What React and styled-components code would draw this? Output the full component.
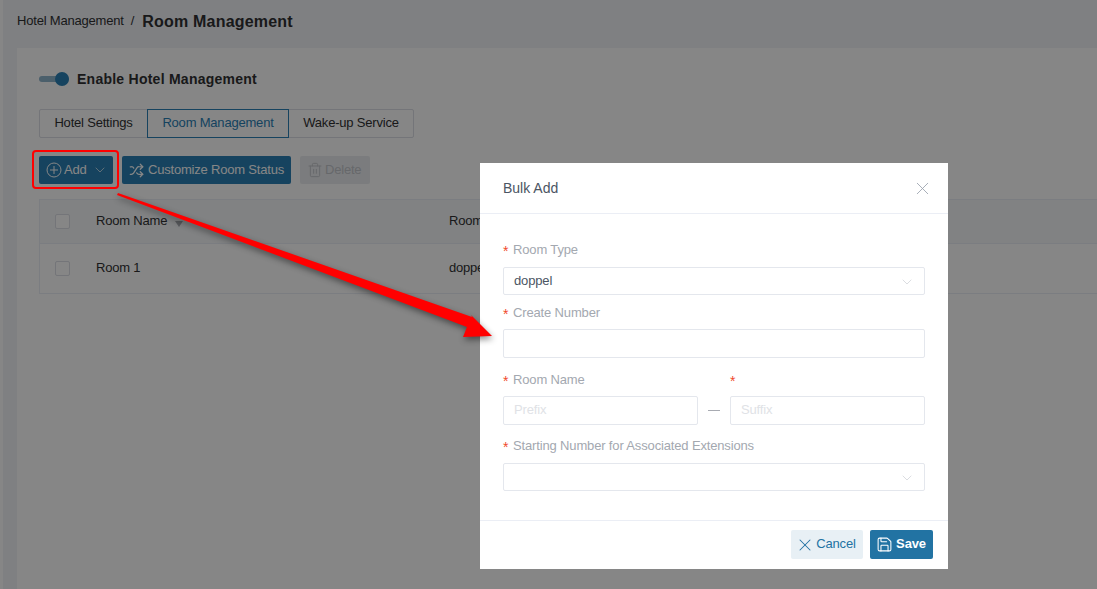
import React from 'react'
import styled, { createGlobalStyle } from 'styled-components'
import { ChevronDown, Shuffle, Trash2, X, Save } from 'lucide-react'

const Global = createGlobalStyle`
  html, body { margin: 0; padding: 0; height: 100%; overflow: hidden; }
  body { font-family: "Liberation Sans", Arial, sans-serif; font-size: 13px; color: #303133; }
`

const Page = styled.div`
  position: relative;
  width: 1097px;
  height: 589px;
  overflow: hidden;
  background: linear-gradient(to right, #fff 3px, #f1f4f8 3px);
  padding: 0 0 0 17px;
  box-sizing: border-box;
`
const Crumbs = styled.div`
  height: 48px;
  display: flex;
  align-items: center;
  padding-bottom: 5px;
  box-sizing: border-box;
`
const CrumbLink = styled.span`
  font-size: 13px;
  letter-spacing: -0.2px;
  color: #303133;
  margin-top: -2px;
`
const Slash = styled.span`
  margin: -2px 8px 0 7px;
  font-size: 13px;
  color: #303133;
`
const CrumbTitle = styled.span`
  font-size: 16px;
  font-weight: 700;
  letter-spacing: 0.2px;
  color: #303133;
`
const Card = styled.section`
  background: #fff;
  height: 541px;
  padding: 22px 0 0 22px;
  box-sizing: border-box;
`
const SwitchRow = styled.div`
  display: flex;
  align-items: center;
  gap: 8px;
  height: 18px;
`
const Track = styled.span`
  position: relative;
  width: 30px;
  height: 6px;
  border-radius: 3px;
  background: #8fb5cc;
`
const Knob = styled.span`
  position: absolute;
  right: 0;
  top: -4px;
  width: 14px;
  height: 14px;
  border-radius: 50%;
  background: #2a80b5;
`
const SwitchLabel = styled.span`
  font-size: 14px;
  font-weight: 700;
  letter-spacing: 0.25px;
  color: #303133;
`
const Tabs = styled.div`
  display: flex;
  margin-top: 21px;
  height: 29px;
`
const Tab = styled.div`
  display: flex;
  align-items: center;
  justify-content: center;
  box-sizing: border-box;
  width: ${p => p.$w}px;
  font-size: 13px;
  letter-spacing: -0.2px;
  padding-bottom: 2px;
  margin-left: ${p => (p.$first ? 0 : -1)}px;
  border: 1px solid ${p => (p.$active ? '#2a80b5' : '#dcdfe6')};
  color: ${p => (p.$active ? '#2a80b5' : '#303133')};
  position: relative;
  z-index: ${p => (p.$active ? 1 : 0)};
  border-radius: ${p => (p.$first ? '2px 0 0 2px' : p.$last ? '0 2px 2px 0' : '0')};
`
const Toolbar = styled.div`
  display: flex;
  gap: 9px;
  margin-top: 18px;
  height: 28px;
`
const Button = styled.div`
  display: flex;
  align-items: center;
  box-sizing: border-box;
  height: 28px;
  width: ${p => p.$w}px;
  padding: 0 0 2px ${p => p.$left || 7}px;
  gap: ${p => p.$gap || 2}px;
  border-radius: 2px;
  font-size: 13px;
  letter-spacing: -0.2px;
  white-space: nowrap;
  color: ${p => (p.$disabled ? '#c3c6cb' : '#fff')};
  background: ${p => (p.$disabled ? '#ebedf0' : '#2a80b5')};
  & > svg { margin-top: 2px; }
`
const AddCaret = styled(ChevronDown)`
  margin-left: 3px;
`
const Table = styled.div`
  margin-top: 15px;
  border: 1px solid #ebeef5;
  border-right: 0;
  font-size: 13px;
  letter-spacing: -0.2px;
  color: #303133;
`
const Row = styled.div`
  display: grid;
  grid-template-columns: 56px 353px 1fr;
  align-items: center;
  height: ${p => (p.$head ? 43 : 49)}px;
  background: ${p => (p.$head ? '#f5f7fa' : '#fff')};
  border-top: ${p => (p.$head ? '0' : '1px solid #ebeef5')};
`
const Check = styled.span`
  display: block;
  width: 15px;
  height: 15px;
  margin-left: 15px;
  box-sizing: border-box;
  border: 1px solid #dcdfe6;
  border-radius: 2px;
  background: #fff;
`
const Cell = styled.div`
  display: flex;
  align-items: center;
  margin-top: -2px;
`
const Sort = styled.svg`
  margin-left: 8px;
  margin-top: 6px;
`
const Overlay = styled.div`
  position: absolute;
  inset: 0;
  z-index: 2;
  background: rgba(0, 0, 0, 0.475);
`
const Modal = styled.div`
  position: absolute;
  z-index: 3;
  left: 480px;
  top: 163px;
  width: 468px;
  height: 406px;
  background: #fff;
  display: flex;
  flex-direction: column;
`
const ModalHead = styled.header`
  height: 51px;
  box-sizing: border-box;
  display: flex;
  align-items: center;
  justify-content: space-between;
  padding: 0 15px 0 23px;
  border-bottom: 1px solid #ebeef5;
  font-size: 14px;
  color: #4b5563;
`
const Close = styled(X)`
  color: #9ca3af;
  margin-top: 1px;
`
const ModalBody = styled.div`
  flex: 1;
  padding: 26px 23px 0;
`
const Label = styled.div`
  display: flex;
  align-items: center;
  height: 18px;
  font-size: 13px;
  letter-spacing: -0.15px;
  color: #a3a8b0;
  margin-top: ${p => p.$mt || 0}px;
`
const Star = styled.span`
  color: #f04a2b;
  width: 10px;
  font-size: 14px;
  line-height: 18px;
  padding-top: 2px;
  height: 16px;
`
const Field = styled.div`
  display: flex;
  align-items: center;
  box-sizing: border-box;
  height: ${p => p.$h || 28}px;
  flex: 1;
  margin-top: ${p => p.$mt || 0}px;
  padding: 0 10px 2px;
  border: 1px solid #e4e7ed;
  border-radius: 2px;
  font-size: 13px;
  letter-spacing: -0.15px;
  color: #4b5563;
`
const Placeholder = styled.span`
  color: #e0e2e6;
`
const Caret = styled(ChevronDown)`
  color: #c9ccd2;
  margin: 3px -1px 0 auto;
`
const Pair = styled.div`
  display: grid;
  grid-template-columns: 195px 32px 195px;
  margin-top: ${p => p.$mt || 0}px;
`
const Dash = styled.span`
  display: block;
  width: 12px;
  height: 1px;
  background: #a8abb2;
  margin: auto;
`
const ModalFoot = styled.footer`
  height: 49px;
  box-sizing: border-box;
  border-top: 1px solid #ebeef5;
  display: flex;
  justify-content: flex-end;
  align-items: flex-start;
  gap: 7px;
  padding: 9px 15px 0 0;
`
const FootButton = styled.div`
  display: flex;
  align-items: center;
  justify-content: center;
  gap: ${p => (p.$primary ? 3 : 1)}px;
  box-sizing: border-box;
  width: ${p => p.$w}px;
  height: 29px;
  padding: 0 ${p => (p.$primary ? 1 : 3)}px 2px 0;
  border-radius: 2px;
  font-size: 13px;
  letter-spacing: -0.15px;
  font-weight: ${p => (p.$primary ? 700 : 400)};
  color: ${p => (p.$primary ? '#fff' : '#2273a3')};
  background: ${p => (p.$primary ? '#2273a3' : '#e8f0f5')};
  & > svg { margin-top: 2px; }
`
const Annotation = styled.svg`
  position: absolute;
  z-index: 4;
  left: 0;
  top: 0;
  pointer-events: none;
`
const Arrow = styled.path`
  fill: #f00;
  filter: drop-shadow(1px 3px 3px rgba(0, 0, 0, 0.45));
`
const Frame = styled.rect`
  fill: none;
  stroke: #f00;
  stroke-width: 2;
`

const PlusCircle = () => (
  <svg width="16" height="16" viewBox="0 0 16 16" fill="none" stroke="currentColor" strokeWidth="1">
    <circle cx="8" cy="8" r="7" />
    <path d="M8 4v8M4 8h8" />
  </svg>
)

const App = () => (
  <Page>
    <Global />
    <Crumbs>
      <CrumbLink>Hotel Management</CrumbLink>
      <Slash>/</Slash>
      <CrumbTitle>Room Management</CrumbTitle>
    </Crumbs>
    <Card>
      <SwitchRow>
        <Track><Knob /></Track>
        <SwitchLabel>Enable Hotel Management</SwitchLabel>
      </SwitchRow>
      <Tabs>
        <Tab $first $w={109}>Hotel Settings</Tab>
        <Tab $active $w={142}>Room Management</Tab>
        <Tab $last $w={126}>Wake-up Service</Tab>
      </Tabs>
      <Toolbar>
        <Button $w={74}>
          <PlusCircle />
          Add
          <AddCaret size={16} strokeWidth={1} />
        </Button>
        <Button $w={169} $gap={4}>
          <Shuffle size={15} />
          Customize Room Status
        </Button>
        <Button $w={70} $disabled>
          <Trash2 size={16} strokeWidth={1.5} />
          Delete
        </Button>
      </Toolbar>
      <Table>
        <Row $head>
          <Check />
          <Cell>
            Room Name
            <Sort width="8" height="6" viewBox="0 0 8 6"><path d="M0 0h8L4 6z" fill="#a8abb2" /></Sort>
          </Cell>
          <Cell>Room Type</Cell>
        </Row>
        <Row>
          <Check />
          <Cell>Room 1</Cell>
          <Cell>doppel</Cell>
        </Row>
      </Table>
    </Card>
    <Overlay />
    <Modal>
      <ModalHead>
        Bulk Add
        <Close size={21} strokeWidth={1} />
      </ModalHead>
      <ModalBody>
        <Label><Star>*</Star>Room Type</Label>
        <Field $mt={9}>doppel<Caret size={16} strokeWidth={1} /></Field>
        <Label $mt={8}><Star>*</Star>Create Number</Label>
        <Field $mt={8} $h={29} />
        <Pair $mt={12}>
          <Label><Star>*</Star>Room Name</Label>
          <span />
          <Label><Star>*</Star></Label>
        </Pair>
        <Pair $mt={8}>
          <Field $h={29}><Placeholder>Prefix</Placeholder></Field>
          <Dash />
          <Field $h={29}><Placeholder>Suffix</Placeholder></Field>
        </Pair>
        <Label $mt={11}><Star>*</Star>Starting Number for Associated Extensions</Label>
        <Field $mt={9}><Caret size={16} strokeWidth={1} /></Field>
      </ModalBody>
      <ModalFoot>
        <FootButton $w={72}><X size={20} strokeWidth={1.25} />Cancel</FootButton>
        <FootButton $w={63} $primary><Save size={17} strokeWidth={1.5} />Save</FootButton>
      </ModalFoot>
    </Modal>
    <Annotation width="1097" height="589" viewBox="0 0 1097 589">
      <Frame x="33" y="151" width="85" height="37" rx="3" />
      <Arrow d="M118 193 L472 317 L471 315 L492 336 L463 337 L467 327 L117 195 Z" />
    </Annotation>
  </Page>
)

export default App
